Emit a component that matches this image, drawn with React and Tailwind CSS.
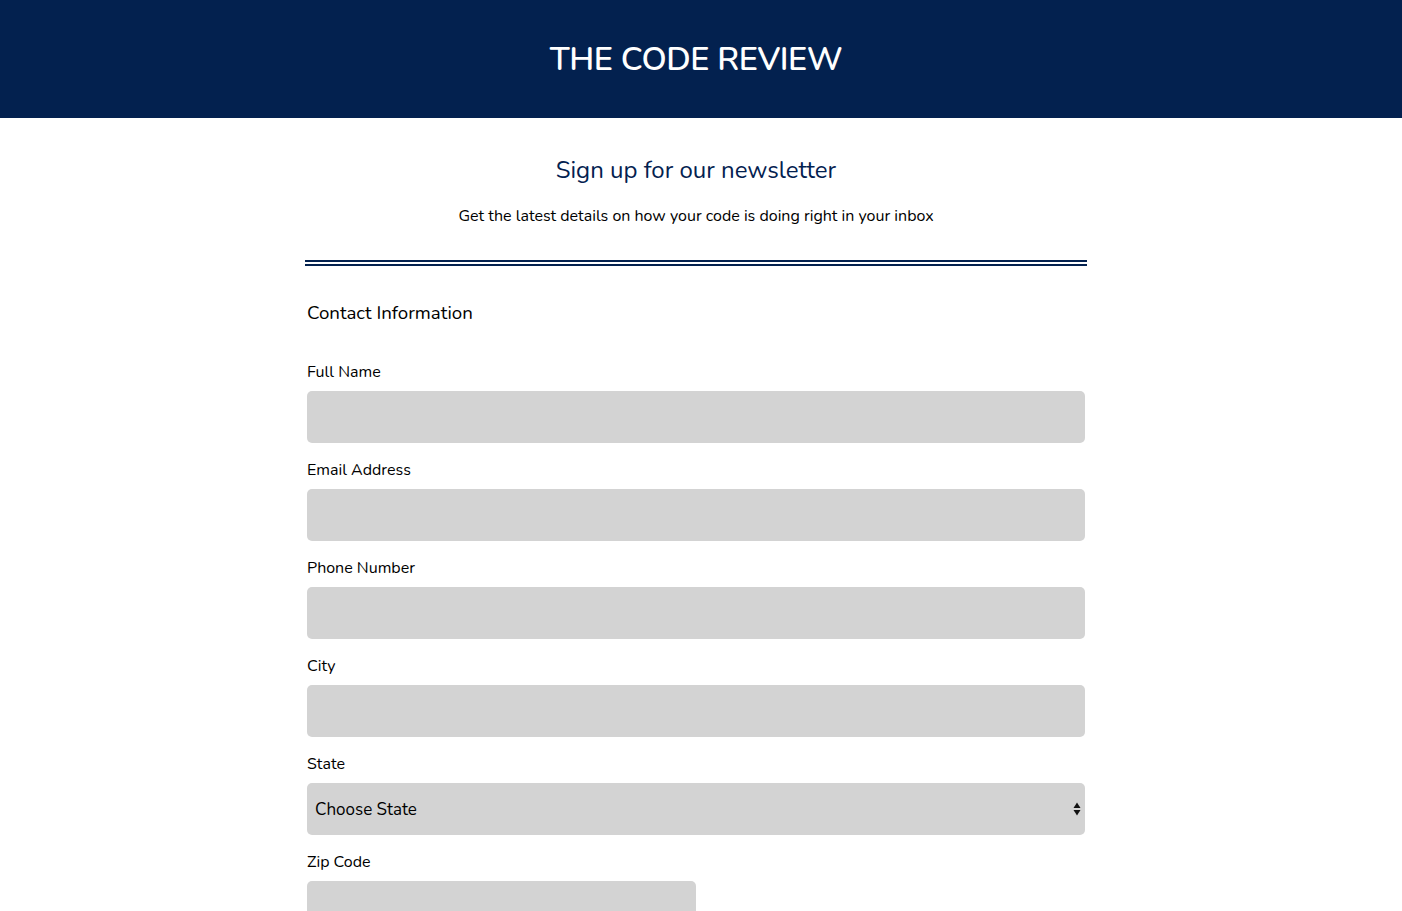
import React from "react";

const Field = ({ label, half }) => (
  <div className="mt-[17px] first:mt-0">
    <label className="block text-[16px] leading-5 text-black">{label}</label>
    <input
      type="text"
      className={`mt-[9px] block h-[52px] rounded-[5px] bg-[#d3d3d3] px-2 outline-none ${half ? "w-[389px]" : "w-full"}`}
    />
  </div>
);

export default function App() {
  return (
    <div className="min-h-screen bg-white pr-[10px] font-['Nunito','Lato',sans-serif] text-black">
      <header className="-mr-[10px] flex h-[118px] items-center justify-center bg-[#03214f] pr-[10px]">
        <h1 className="pt-px text-[32.5px] font-semibold tracking-[-0.4px] text-white">THE CODE REVIEW</h1>
      </header>

      <div className="mx-auto w-[782px]">
        <h2 className="mt-9 text-center text-[24px] leading-8 text-[#03214f]">Sign up for our newsletter</h2>
        <p className="mt-5 text-center text-[16px] leading-5">
          Get the latest details on how your code is doing right in your inbox
        </p>
        <hr className="mt-[34px] border-0 border-t-[6px] border-double border-[#03214f]" />

        <form className="px-[2px]">
          <h3 className="mt-[35px] text-[18.7px] leading-6">Contact Information</h3>
          <div className="mt-[37px]">
            <Field label="Full Name" />
            <Field label="Email Address" />
            <Field label="Phone Number" />
            <Field label="City" />
            <div className="mt-[17px]">
              <label className="block text-[16px] leading-5">State</label>
              <div className="relative mt-[9px]">
                <select className="block h-[52px] w-full appearance-none rounded-[5px] bg-[#d3d3d3] pl-2 pt-px text-[17px] text-black outline-none">
                  <option>Choose State</option>
                </select>
                <svg
                  className="pointer-events-none absolute right-[4px] top-[19px]"
                  width="8"
                  height="14"
                  viewBox="0 0 8 14"
                >
                  <path d="M4 0.5 L7.5 6 L0.5 6 Z" fill="#111" />
                  <path d="M4 13.5 L7.5 8 L0.5 8 Z" fill="#111" />
                </svg>
              </div>
            </div>
            <Field label="Zip Code" half />
          </div>
        </form>
        <div className="h-16" />
      </div>
    </div>
  );
}
